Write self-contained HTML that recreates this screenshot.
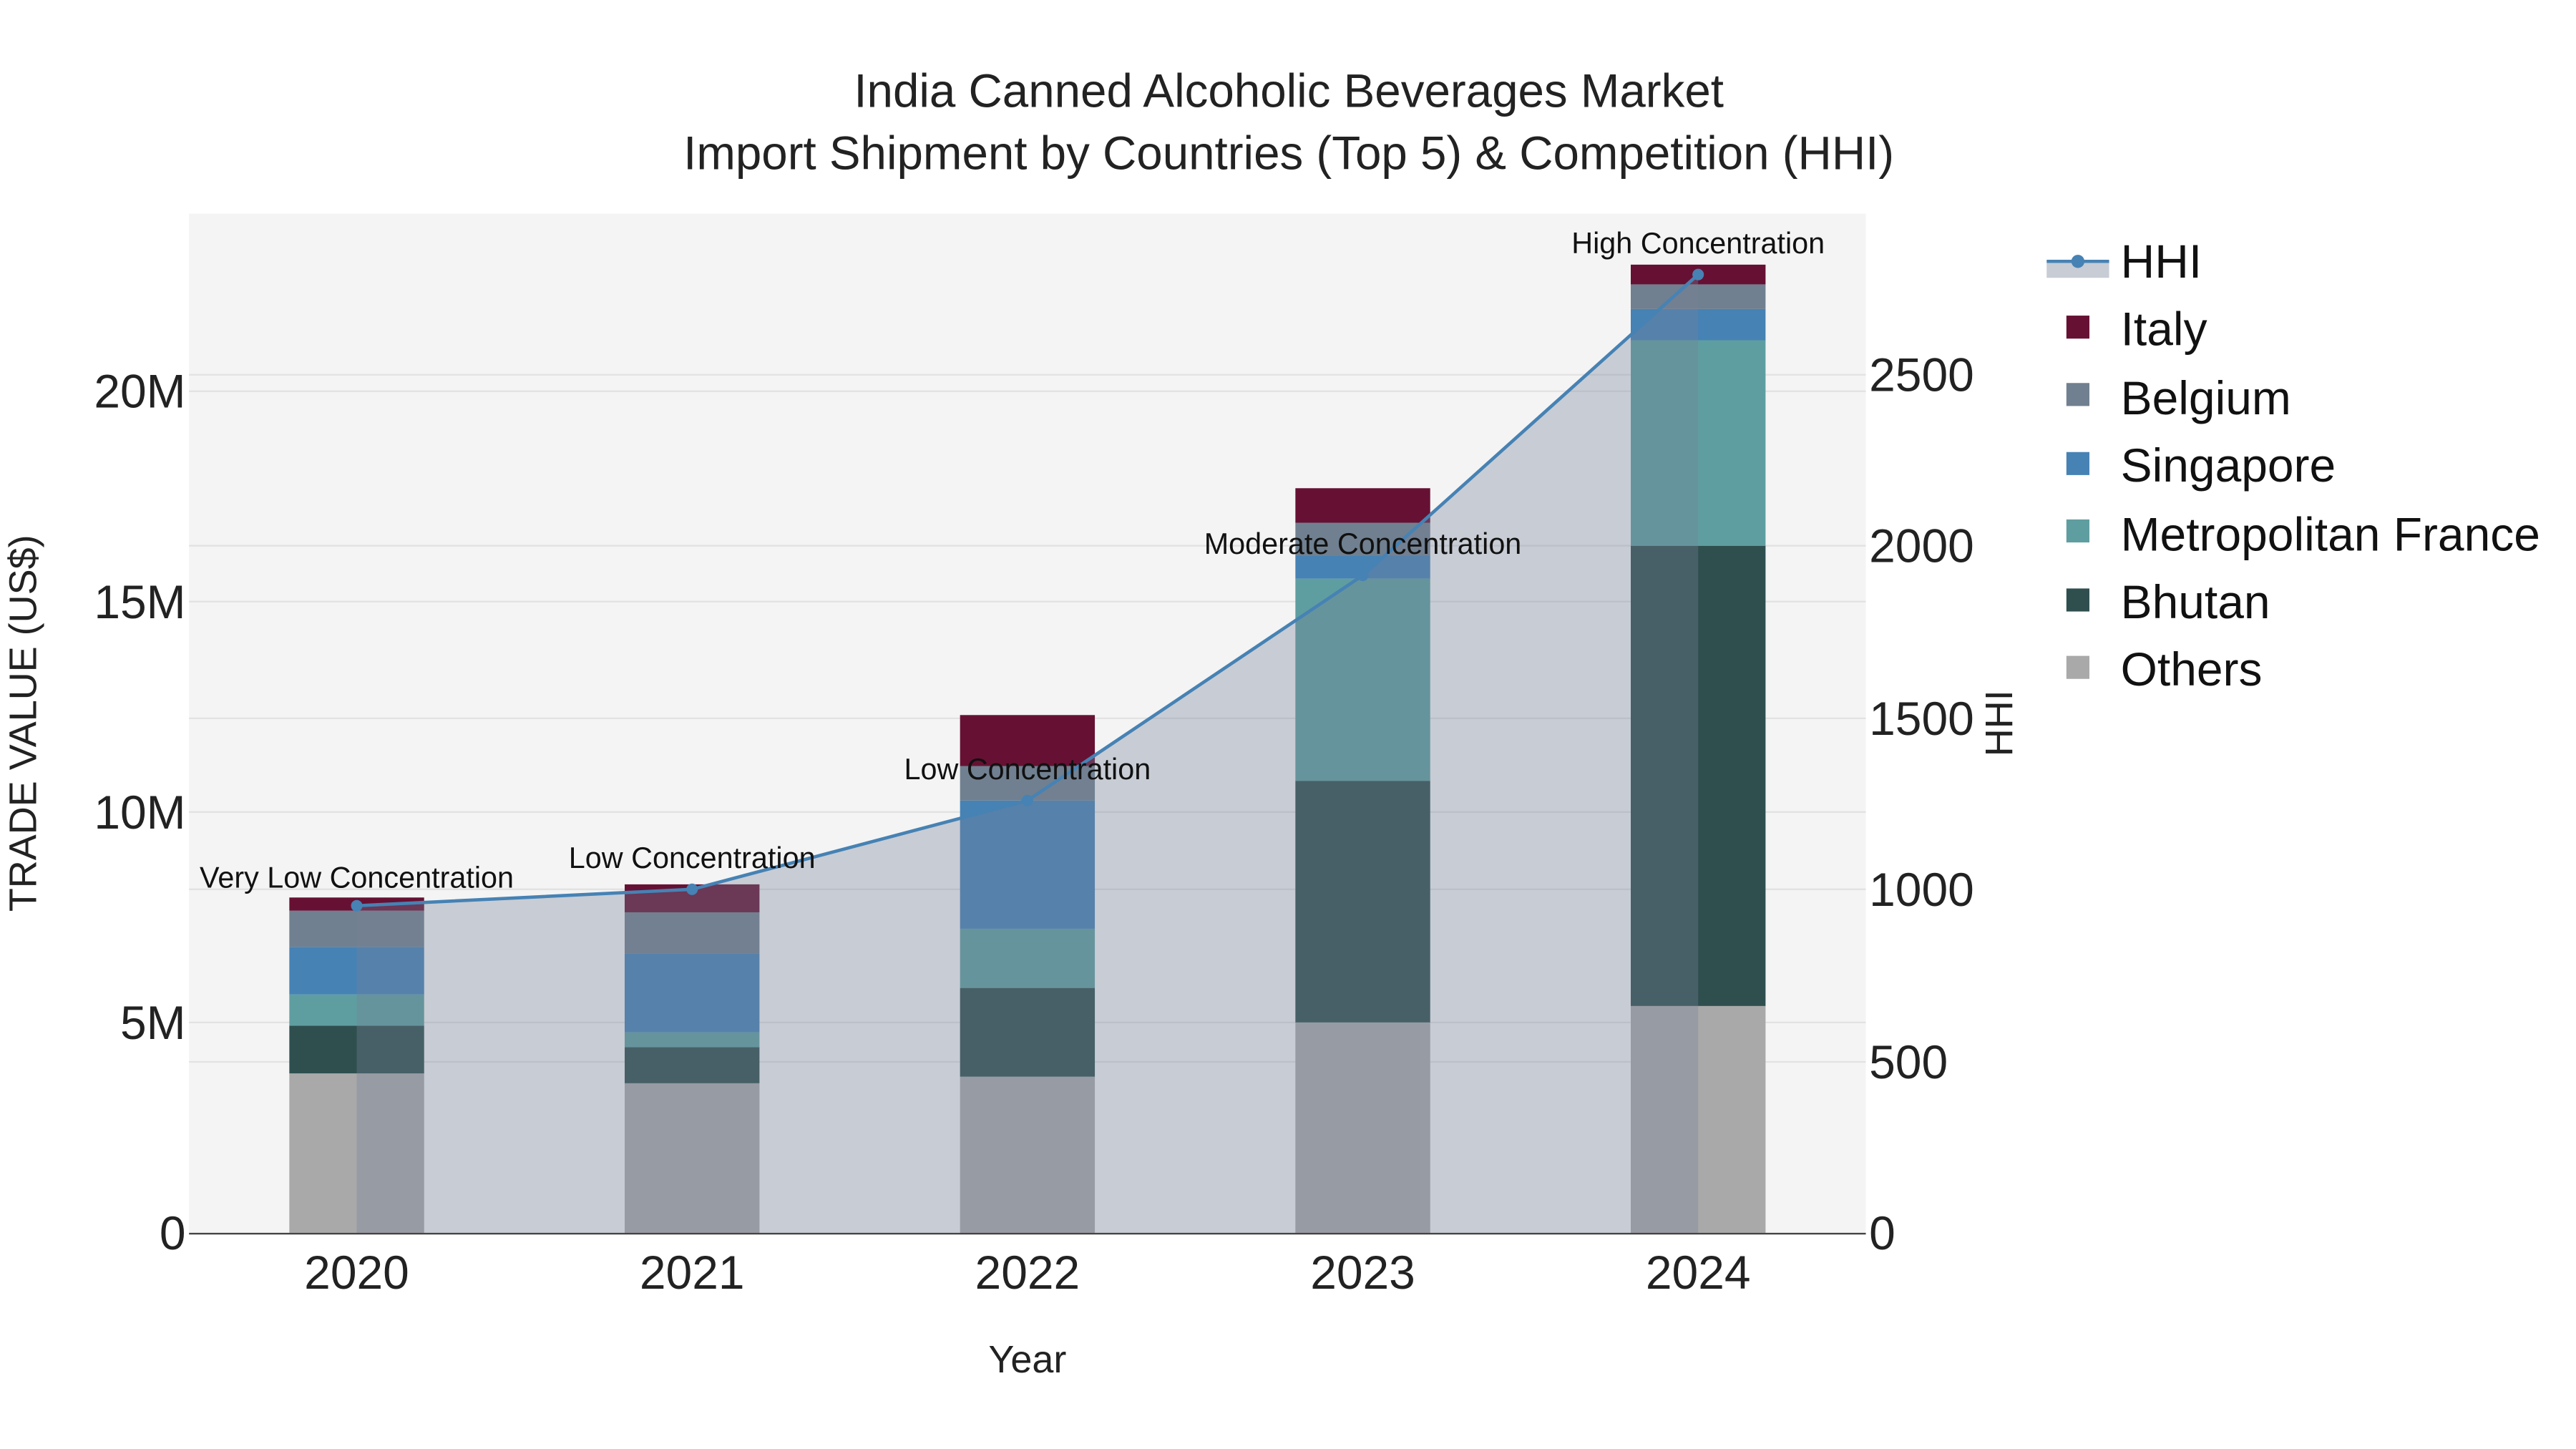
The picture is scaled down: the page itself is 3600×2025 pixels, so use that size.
<!DOCTYPE html>
<html><head><meta charset="utf-8"><style>html,body{margin:0;padding:0;background:#fff}svg{display:block}</style></head>
<body>
<svg width="3600" height="2025" viewBox="0 0 1567 881.5" preserveAspectRatio="none" xmlns="http://www.w3.org/2000/svg" font-family="Liberation Sans, sans-serif">
<rect width="1567" height="882" fill="#fff"/>
<rect x="115" y="130" width="1020" height="620" fill="#f4f4f4"/>
<g stroke="#e2e2e2" stroke-width="1">
<line x1="115" x2="1135" y1="622" y2="622"/><line x1="115" x2="1135" y1="494" y2="494"/><line x1="115" x2="1135" y1="366" y2="366"/><line x1="115" x2="1135" y1="238" y2="238"/>
<line x1="115" x2="1135" y1="646" y2="646"/><line x1="115" x2="1135" y1="541" y2="541"/><line x1="115" x2="1135" y1="437" y2="437"/><line x1="115" x2="1135" y1="332" y2="332"/><line x1="115" x2="1135" y1="228" y2="228"/>
</g>
<g>
<rect x="176" y="653" width="82" height="97" fill="#a9a9a9"/><rect x="176" y="624" width="82" height="29" fill="#2f4f4f"/><rect x="176" y="605" width="82" height="19" fill="#5f9ea0"/><rect x="176" y="576" width="82" height="29" fill="#4682b4"/><rect x="176" y="554" width="82" height="22" fill="#708090"/><rect x="176" y="546" width="82" height="8" fill="#661133"/>
<rect x="380" y="659" width="82" height="91" fill="#a9a9a9"/><rect x="380" y="637" width="82" height="22" fill="#2f4f4f"/><rect x="380" y="628" width="82" height="9" fill="#5f9ea0"/><rect x="380" y="580" width="82" height="48" fill="#4682b4"/><rect x="380" y="555" width="82" height="25" fill="#708090"/><rect x="380" y="538" width="82" height="17" fill="#661133"/>
<rect x="584" y="655" width="82" height="95" fill="#a9a9a9"/><rect x="584" y="601" width="82" height="54" fill="#2f4f4f"/><rect x="584" y="565" width="82" height="36" fill="#5f9ea0"/><rect x="584" y="487" width="82" height="78" fill="#4682b4"/><rect x="584" y="466" width="82" height="21" fill="#708090"/><rect x="584" y="435" width="82" height="31" fill="#661133"/>
<rect x="788" y="622" width="82" height="128" fill="#a9a9a9"/><rect x="788" y="475" width="82" height="147" fill="#2f4f4f"/><rect x="788" y="352" width="82" height="123" fill="#5f9ea0"/><rect x="788" y="338" width="82" height="14" fill="#4682b4"/><rect x="788" y="318" width="82" height="20" fill="#708090"/><rect x="788" y="297" width="82" height="21" fill="#661133"/>
<rect x="992" y="612" width="82" height="138" fill="#a9a9a9"/><rect x="992" y="332" width="82" height="280" fill="#2f4f4f"/><rect x="992" y="207" width="82" height="125" fill="#5f9ea0"/><rect x="992" y="188" width="82" height="19" fill="#4682b4"/><rect x="992" y="173" width="82" height="15" fill="#708090"/><rect x="992" y="161" width="82" height="12" fill="#661133"/>
</g>
<polygon points="217,750 217,551 421,541 625,487 829,350 1033,167 1033,750" fill="rgb(117,129,152)" fill-opacity="0.35"/>
<polyline points="217,551 421,541 625,487 829,350 1033,167" fill="none" stroke="#4682b4" stroke-width="2"/>
<g fill="#4682b4"><circle cx="217" cy="551" r="3.5"/><circle cx="421" cy="541" r="3.5"/><circle cx="625" cy="487" r="3.5"/><circle cx="829" cy="350" r="3.5"/><circle cx="1033" cy="167" r="3.5"/></g>
<line x1="115" x2="1135" y1="750.5" y2="750.5" stroke="#444" stroke-width="1"/>
<g font-size="18" fill="#111" text-anchor="middle">
<text x="217" y="540">Very Low Concentration</text><text x="421" y="528">Low Concentration</text><text x="625" y="474">Low Concentration</text><text x="829" y="337">Moderate Concentration</text><text x="1033" y="154">High Concentration</text>
</g>
<g font-size="28.7" fill="#222" text-anchor="end">
<text x="113" y="760">0</text><text x="113" y="632">5M</text><text x="113" y="504">10M</text><text x="113" y="376">15M</text><text x="113" y="248">20M</text>
</g>
<g font-size="28.7" fill="#222">
<text x="1137" y="760">0</text><text x="1137" y="656">500</text><text x="1137" y="551">1000</text><text x="1137" y="447">1500</text><text x="1137" y="342">2000</text><text x="1137" y="238">2500</text>
</g>
<g font-size="28.7" fill="#222" text-anchor="middle">
<text x="217" y="784">2020</text><text x="421" y="784">2021</text><text x="625" y="784">2022</text><text x="829" y="784">2023</text><text x="1033" y="784">2024</text>
</g>
<text x="625" y="835" font-size="23.5" fill="#222" text-anchor="middle">Year</text>
<text transform="translate(22,440) rotate(-90)" font-size="23.5" fill="#222" text-anchor="middle">TRADE VALUE (US$)</text>
<text transform="translate(1224,440) rotate(-90)" font-size="23.5" fill="#222" text-anchor="middle">HHI</text>
<g font-size="28.5" fill="#222" text-anchor="middle"><text x="784" y="65">India Canned Alcoholic Beverages Market</text><text x="784" y="103">Import Shipment by Countries (Top 5) &amp; Competition (HHI)</text></g>
<rect x="1245" y="160" width="38" height="9" fill="#c8ccd4"/>
<line x1="1245" x2="1283" y1="159" y2="159" stroke="#4682b4" stroke-width="2"/><circle cx="1264" cy="159" r="4" fill="#4682b4"/>
<g><rect x="1257" y="192" width="14" height="14" fill="#661133"/><rect x="1257" y="233" width="14" height="14" fill="#708090"/><rect x="1257" y="275" width="14" height="14" fill="#4682b4"/><rect x="1257" y="316" width="14" height="14" fill="#5f9ea0"/><rect x="1257" y="358" width="14" height="14" fill="#2f4f4f"/><rect x="1257" y="399" width="14" height="14" fill="#a9a9a9"/></g>
<g font-size="28.7" fill="#111"><text x="1290" y="169">HHI</text><text x="1290" y="210">Italy</text><text x="1290" y="252">Belgium</text><text x="1290" y="293">Singapore</text><text x="1290" y="335">Metropolitan France</text><text x="1290" y="376">Bhutan</text><text x="1290" y="417">Others</text></g>
</svg>
</body></html>
